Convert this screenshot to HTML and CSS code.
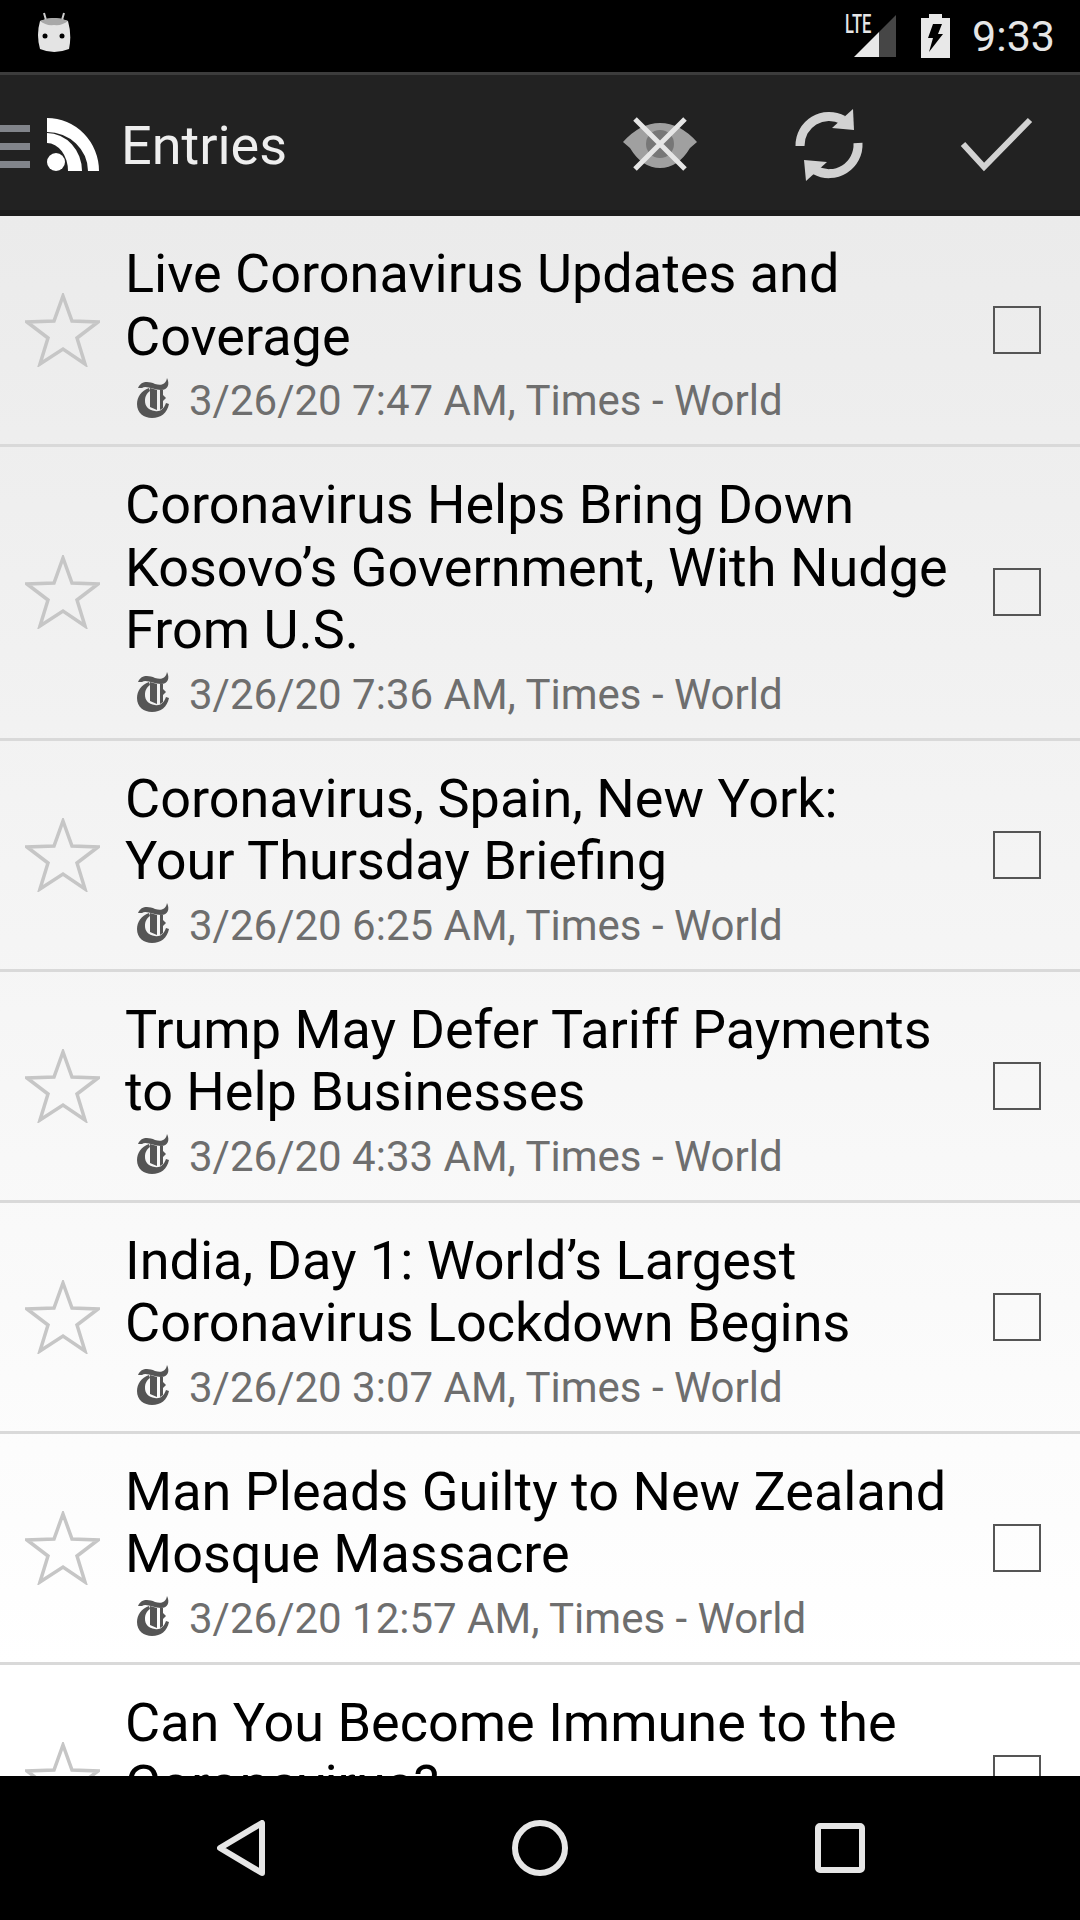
FILE: index.html
```html
<!DOCTYPE html>
<html lang="en">
<head>
    <meta charset="UTF-8">
    <meta name="viewport" content="width=device-width, initial-scale=1.0">
    <title>Entries</title>
    <link rel="stylesheet" href="styles.css">
</head>
<body>
    <svg class="defs" width="0" height="0">
        <symbol id="star" viewBox="0 0 75 74">
            <path d="M38 3 L47 28 L73 29 L52 45 L60 71 L38 56 L15 71 L23 45 L2 29 L29 28 Z" fill="none" stroke="#c6c6c6" stroke-width="3.5"/>
        </symbol>
        <symbol id="nyt" viewBox="0 0 34 42">
            <path d="M2 11 C5 4 12 4 19 7 C26 9 30 7 31 1 C34 7 32 13 25 13 C18 13 10 8 6 11 Z" fill="#555"/>
            <path d="M13 11 C5 14 1 20 1 27 C1 36 8 41 16 41 C25 41 31 36 33 27 L30 26 C28 32 24 35 19 34 C12 33 9 29 9 24 C9 19 11 16 14 14 Z" fill="#555"/>
            <path d="M14 11 L21 13 L21 33 L14 30 Z" fill="#555"/>
            <path d="M24 13 L27 13 L27 31 L24 33 Z" fill="#555"/>
            <path d="M27 18 L30 21 L27 24 L24 21 Z" fill="#555"/>
        </symbol>
    </svg>

    <div class="status-bar">
        <svg class="android" width="36" height="44" viewBox="0 0 36 44">
            <path d="M10 10 L8 3 M26 10 L28 3" stroke="#ccc" stroke-width="2"/>
            <path d="M4 11 Q18 5 32 11 Q36 25 33 39 Q18 45 4 39 Q0 25 4 11 Z" fill="#e4e4e4"/>
            <path d="M4 11 Q18 5 32 11 Q26 16 18 15 Q10 16 4 11 Z" fill="#a8a8a8"/>
            <circle cx="9" cy="26" r="2.5" fill="#000"/>
            <circle cx="26" cy="26" r="2.5" fill="#000"/>
        </svg>
        <span class="lte">LTE</span>
        <svg class="signal" width="42" height="42" viewBox="0 0 42 42">
            <path d="M0 42 L25 17 L25 42 Z" fill="#e8e8e8"/>
            <path d="M25 17 L42 0 L42 42 L25 42 Z" fill="#464646"/>
        </svg>
        <svg class="battery" width="29" height="44" viewBox="0 0 29 44">
            <path d="M0 4 L8 4 L8 0 L21 0 L21 4 L29 4 L29 44 L0 44 Z" fill="#e8e8e8"/>
            <path d="M12 10 L21 10 L17 20 L22 20 L8 38 L12 24 L7 24 Z" fill="#000"/>
        </svg>
        <span class="clock">9:33</span>
    </div>

    <div class="action-bar">
        <svg class="menu-icon" width="30" height="80" viewBox="0 103 30 80">
            <path d="M0 125 H30 V132 H0 Z M0 143 H30 V150 H0 Z M0 161 H30 V168 H0 Z" fill="#81848a"/>
        </svg>
        <svg class="rss-icon" width="53" height="80" viewBox="47 103 53 80">
            <circle cx="56" cy="162" r="9" fill="#fff"/>
            <path d="M47 133 A35 38 0 0 1 82 171 L68 171 A21 28 0 0 0 47 143 Z" fill="#fff"/>
            <path d="M47 118 A52 53 0 0 1 99 171 L88 171 A41 39 0 0 0 47 132 Z" fill="#fff"/>
        </svg>
        <span class="page-title">Entries</span>
        <div class="actions">
            <div class="action">
                <svg width="80" height="80" viewBox="620 103 80 80">
                    <path d="M623 142 Q640 123 660 123 Q680 123 697 142 L690 148 Q678 168 660 168 Q642 168 630 148 Z" fill="#a0a0a0"/>
                    <circle cx="660" cy="144" r="14" fill="#777"/>
                    <path d="M635 119 L685 169 M685 119 L635 169" stroke="#e6e6e6" stroke-width="5"/>
                </svg>
            </div>
            <div class="action">
                <svg width="80" height="80" viewBox="788 103 80 80">
                    <path d="M800 146 A29 29 0 0 1 843 120" fill="none" stroke="#d2d2d2" stroke-width="9"/>
                    <path d="M858 143 A29 29 0 0 1 815 170" fill="none" stroke="#d2d2d2" stroke-width="9"/>
                    <path d="M853 109 L854 130 L832 128 Z" fill="#d2d2d2"/>
                    <path d="M806 181 L804 160 L827 162 Z" fill="#d2d2d2"/>
                </svg>
            </div>
            <div class="action">
                <svg width="80" height="80" viewBox="956 103 80 80">
                    <path d="M963 144 L984 167 L1030 120" fill="none" stroke="#d2d2d2" stroke-width="6"/>
                </svg>
            </div>
        </div>
    </div>

    <div class="entries">
        <div class="entry">
            <svg class="star"><use href="#star"/></svg>
            <div class="entry-text">
                <div class="entry-title">Live Coronavirus Updates and Coverage</div>
                <div class="entry-meta"><svg class="feed-icon"><use href="#nyt"/></svg>3/26/20 7:47 AM, Times - World</div>
            </div>
            <div class="check"></div>
        </div>
        <div class="entry">
            <svg class="star"><use href="#star"/></svg>
            <div class="entry-text">
                <div class="entry-title">Coronavirus Helps Bring Down Kosovo’s Government, With Nudge From U.S.</div>
                <div class="entry-meta"><svg class="feed-icon"><use href="#nyt"/></svg>3/26/20 7:36 AM, Times - World</div>
            </div>
            <div class="check"></div>
        </div>
        <div class="entry">
            <svg class="star"><use href="#star"/></svg>
            <div class="entry-text">
                <div class="entry-title">Coronavirus, Spain, New York: Your Thursday Briefing</div>
                <div class="entry-meta"><svg class="feed-icon"><use href="#nyt"/></svg>3/26/20 6:25 AM, Times - World</div>
            </div>
            <div class="check"></div>
        </div>
        <div class="entry">
            <svg class="star"><use href="#star"/></svg>
            <div class="entry-text">
                <div class="entry-title">Trump May Defer Tariff Payments to Help Businesses</div>
                <div class="entry-meta"><svg class="feed-icon"><use href="#nyt"/></svg>3/26/20 4:33 AM, Times - World</div>
            </div>
            <div class="check"></div>
        </div>
        <div class="entry">
            <svg class="star"><use href="#star"/></svg>
            <div class="entry-text">
                <div class="entry-title">India, Day 1: World’s Largest Coronavirus Lockdown Begins</div>
                <div class="entry-meta"><svg class="feed-icon"><use href="#nyt"/></svg>3/26/20 3:07 AM, Times - World</div>
            </div>
            <div class="check"></div>
        </div>
        <div class="entry">
            <svg class="star"><use href="#star"/></svg>
            <div class="entry-text">
                <div class="entry-title">Man Pleads Guilty to New Zealand Mosque Massacre</div>
                <div class="entry-meta"><svg class="feed-icon"><use href="#nyt"/></svg>3/26/20 12:57 AM, Times - World</div>
            </div>
            <div class="check"></div>
        </div>
        <div class="entry">
            <svg class="star"><use href="#star"/></svg>
            <div class="entry-text">
                <div class="entry-title">Can You Become Immune to the Coronavirus?</div>
                <div class="entry-meta"></div>
            </div>
            <div class="check"></div>
        </div>
    </div>

    <div class="nav-bar">
        <svg width="48" height="56" viewBox="0 0 48 56">
            <path d="M45 3 L45 53 L3 28 Z" fill="none" stroke="#e6e6e6" stroke-width="6" stroke-linejoin="round"/>
        </svg>
        <svg width="56" height="56" viewBox="0 0 56 56">
            <circle cx="28" cy="28" r="25" fill="none" stroke="#e6e6e6" stroke-width="6"/>
        </svg>
        <svg width="50" height="50" viewBox="0 0 50 50">
            <rect x="3" y="3" width="44" height="44" rx="2" fill="none" stroke="#e6e6e6" stroke-width="6"/>
        </svg>
    </div>
</body>
</html>
```

FILE: styles.css
```css
html, body {
    margin: 0;
    padding: 0;
}
body {
    width: 1080px;
    height: 1920px;
    display: flex;
    flex-direction: column;
    overflow: hidden;
    background-color: #000;
    font-family: Roboto, "Liberation Sans", sans-serif;
}
.defs {
    position: absolute;
}

.status-bar {
    height: 72px;
    flex: none;
    display: flex;
    align-items: flex-start;
    background-color: #000;
    color: #e6e6e6;
}
.android {
    margin: 10px 0 0 36px;
}
.lte {
    width: 25px;
    margin: 10px 0 0 auto;
    font-size: 25px;
    line-height: 30px;
    font-weight: 500;
    transform: scaleX(.66);
    transform-origin: left top;
}
.signal {
    margin: 15px 0 0 -16px;
}
.battery {
    margin: 14px 0 0 25px;
}
.clock {
    margin: 12px 25px 0 22px;
    font-size: 43px;
    line-height: 49px;
}

.action-bar {
    height: 135px;
    flex: none;
    display: flex;
    align-items: center;
    background-color: #222;
    border-top: 3px solid #3c3c3c;
    border-bottom: 6px solid #1a1a1a;
}
.rss-icon {
    margin-left: 17px;
}
.page-title {
    margin-left: 21px;
    padding-top: 5px;
    font-size: 54px;
    color: #eee;
}
.actions {
    margin-left: auto;
    display: flex;
}
.action {
    width: 168px;
    display: flex;
    justify-content: center;
}

.entries {
    flex: 1;
    min-height: 0;
    overflow: hidden;
    background: linear-gradient(#ebebeb, #fff 1450px);
}
.entry {
    display: flex;
    align-items: center;
    border-bottom: 3px solid #d9d9d9;
}
.star {
    width: 75px;
    height: 74px;
    flex: none;
    margin: 0 25px 0 25px;
}
.entry-text {
    flex: 1;
    min-width: 0;
    padding: 27px 38px 19px 0;
}
.entry-title {
    font-size: 54px;
    line-height: 62.5px;
    color: #000;
}
.entry-meta {
    display: flex;
    min-height: 49px;
    margin-top: 8px;
    font-size: 42px;
    line-height: 49px;
    color: #6e6e6e;
}
.feed-icon {
    width: 34px;
    height: 42px;
    flex: none;
    margin: 1px 19px 0 11px;
}
.check {
    width: 48px;
    height: 48px;
    flex: none;
    box-sizing: border-box;
    margin: 0 39px 0 0;
    border: 2px solid #555;
}

.nav-bar {
    height: 144px;
    flex: none;
    display: flex;
    align-items: center;
    background-color: #000;
}
.nav-bar svg:nth-child(1) {
    margin-left: 217px;
}
.nav-bar svg:nth-child(2) {
    margin-left: 247px;
}
.nav-bar svg:nth-child(3) {
    margin-left: 247px;
}
```
